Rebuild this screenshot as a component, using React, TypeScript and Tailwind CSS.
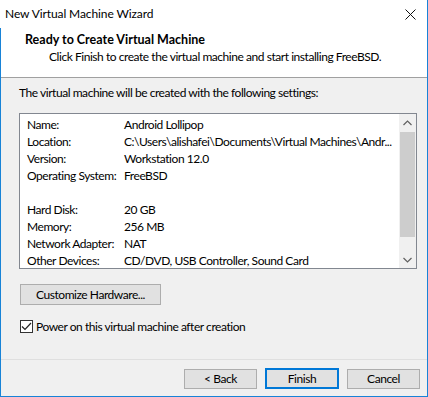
import React from "react";

const rows: [string, string][] = [
  ["Name:", "Android Lollipop"],
  ["Location:", "C:\\Users\\alishafei\\Documents\\Virtual Machines\\Andr..."],
  ["Version:", "Workstation 12.0"],
  ["Operating System:", "FreeBSD"],
  ["", ""],
  ["Hard Disk:", "20 GB"],
  ["Memory:", "256 MB"],
  ["Network Adapter:", "NAT"],
  ["Other Devices:", "CD/DVD, USB Controller, Sound Card"],
];

export default function App() {
  return (
    <div
      className="w-[428px] h-[397px] bg-[#f0f0f0] flex flex-col text-[12px] tracking-[-0.45px] text-black border-r border-b border-[#1883d7] overflow-hidden"
      style={{ fontFamily: 'Lato, "Noto Sans", sans-serif' }}
    >
      {/* Title bar */}
      <div className="h-[28px] bg-white flex items-center justify-between pl-[5px] pr-[11px]">
        <span className="text-[12px] leading-none tracking-[-0.1px]">New Virtual Machine Wizard</span>
        <svg width="11" height="11" viewBox="0 0 11 11">
          <path d="M0.5 0.5 L10.5 10.5 M10.5 0.5 L0.5 10.5" stroke="#111" strokeWidth="1" />
        </svg>
      </div>
      <div className="flex-1 flex flex-col border-l border-[#1883d7]">
        {/* Header */}
        <div className="h-[50px] bg-white border-b border-[#a0a0a0] flex flex-col pt-[3px]">
          <div className="pl-[24px] font-bold text-[12.5px] leading-[17px] tracking-[0px]">Ready to Create Virtual Machine</div>
          <div className="pl-[48px] leading-[17px] whitespace-nowrap">
            Click Finish to create the virtual machine and start installing FreeBSD.
          </div>
        </div>
        {/* Body */}
        <div className="flex-1 flex flex-col pl-[18px] pr-[10px]">
          <div className="mt-[7px] leading-[15px] whitespace-nowrap">
            The virtual machine will be created with the following settings:
          </div>
          <div className="mt-[13px] w-[398px] h-[156px] bg-white border border-[#828790] flex">
            <div className="flex-1 min-w-0 overflow-hidden pt-[2px] pl-[7px]">
              {rows.map(([k, v], i) => (
                <div key={i} className="flex h-[17px] items-center whitespace-nowrap">
                  <span className="w-[97px] shrink-0">{k}</span>
                  <span>{v}</span>
                </div>
              ))}
            </div>
            <div className="w-[17px] shrink-0 bg-[#f0f0f0] flex flex-col items-center">
              <div className="h-[17px] flex items-center justify-center">
                <svg width="9" height="6" viewBox="0 0 9 6">
                  <path d="M0.5 5 L4.5 1 L8.5 5" stroke="#606060" strokeWidth="1.2" fill="none" />
                </svg>
              </div>
              <div className="mt-[1px] w-[15px] h-[105px] bg-[#cdcdcd]" />
              <div className="flex-1" />
              <div className="h-[17px] flex items-center justify-center">
                <svg width="9" height="6" viewBox="0 0 9 6">
                  <path d="M0.5 1 L4.5 5 L8.5 1" stroke="#606060" strokeWidth="1.2" fill="none" />
                </svg>
              </div>
            </div>
          </div>
          <button className="mt-[15px] ml-[1px] w-[141px] h-[21px] bg-[#e1e1e1] border border-[#adadad] flex items-center justify-center leading-none">
            Customize Hardware...
          </button>
          <label className="mt-[14px] ml-[1px] flex items-center gap-[3px]">
            <span className="w-[13px] h-[13px] border border-[#333] bg-white flex items-center justify-center">
              <svg width="11" height="9" viewBox="0 0 11 9">
                <path d="M1 4.5 L4 7.5 L10 1" stroke="#222" strokeWidth="1.2" fill="none" />
              </svg>
            </span>
            <span className="leading-[15px]">Power on this virtual machine after creation</span>
          </label>
        </div>
        {/* Footer */}
        <div className="h-[37px] border-t border-[#dfdfdf] flex items-center justify-end gap-[8px] pr-[7px] pt-[1px]">
          <button className="w-[73px] h-[20px] bg-[#e1e1e1] border border-[#adadad] flex items-center justify-center leading-none">
            &lt; Back
          </button>
          <button className="w-[74px] h-[21px] bg-[#e1e1e1] border-2 border-[#0078d7] flex items-center justify-center leading-none">
            Finish
          </button>
          <button className="w-[73px] h-[20px] bg-[#e1e1e1] border border-[#adadad] flex items-center justify-center leading-none">
            Cancel
          </button>
        </div>
      </div>
    </div>
  );
}
